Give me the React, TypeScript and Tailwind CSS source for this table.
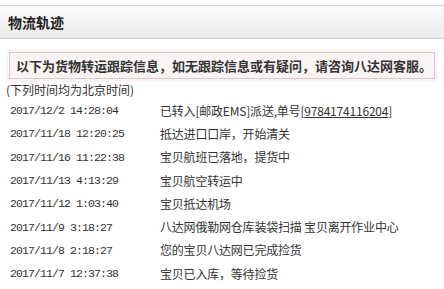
import React from "react";

const rows: [string, React.ReactNode][] = [
  ["2017/12/2 14:28:04", <>已转入[邮政EMS]派送,单号[<span className="underline">9784174116204</span>]</>],
  ["2017/11/18 12:20:25", "抵达进口口岸，开始清关"],
  ["2017/11/16 11:22:38", "宝贝航班已落地，提货中"],
  ["2017/11/13 4:13:29", "宝贝航空转运中"],
  ["2017/11/12 1:03:40", "宝贝抵达机场"],
  ["2017/11/9 3:18:27", "八达网俄勒网仓库装袋扫描 宝贝离开作业中心"],
  ["2017/11/8 2:18:27", "您的宝贝八达网已完成捡货"],
  ["2017/11/7 12:37:38", "宝贝已入库，等待捡货"],
];

const cjk = "font-['SimSun','Noto_Sans_CJK_SC',sans-serif]";

export default function App() {
  return (
    <div className={`w-[444px] h-[289px] bg-white overflow-hidden pt-[5px] text-[#333] ${cjk}`}>
      <div className="h-[34px] border-y border-[#cfcfcf] bg-gradient-to-b from-[#fbfbfb] to-[#ebebeb] flex items-center px-2">
        <span className="text-[14px] font-bold text-[#222]">物流轨迹</span>
      </div>
      <div className="mx-[6px] mt-[10px] p-[3px] bg-[#fbf4f4]">
        <div className="border border-[#dcc8c8] h-[27px] flex items-center pl-[6px] text-[13px] font-bold text-[#333]">
          以下为货物转运跟踪信息，如无跟踪信息或有疑问，请咨询八达网客服。
        </div>
      </div>
      <div className="pl-[6px] text-[12px] leading-[14px] mt-[1px]">(下列时间均为北京时间)</div>
      <div className="border-b border-[#c4c4c4] pb-[7px] mt-[2px]">
        {rows.map(([t, d], i) => (
          <div key={i} className="flex items-center h-[23.3px] text-[12px]">
            <span className="w-[160px] pl-[10px] font-['Liberation_Mono',monospace] text-[11.5px] tracking-[-0.9px] text-[#333]">{t}</span>
            <span className="text-[#333] tracking-[-0.2px]">{d}</span>
          </div>
        ))}
      </div>
    </div>
  );
}
